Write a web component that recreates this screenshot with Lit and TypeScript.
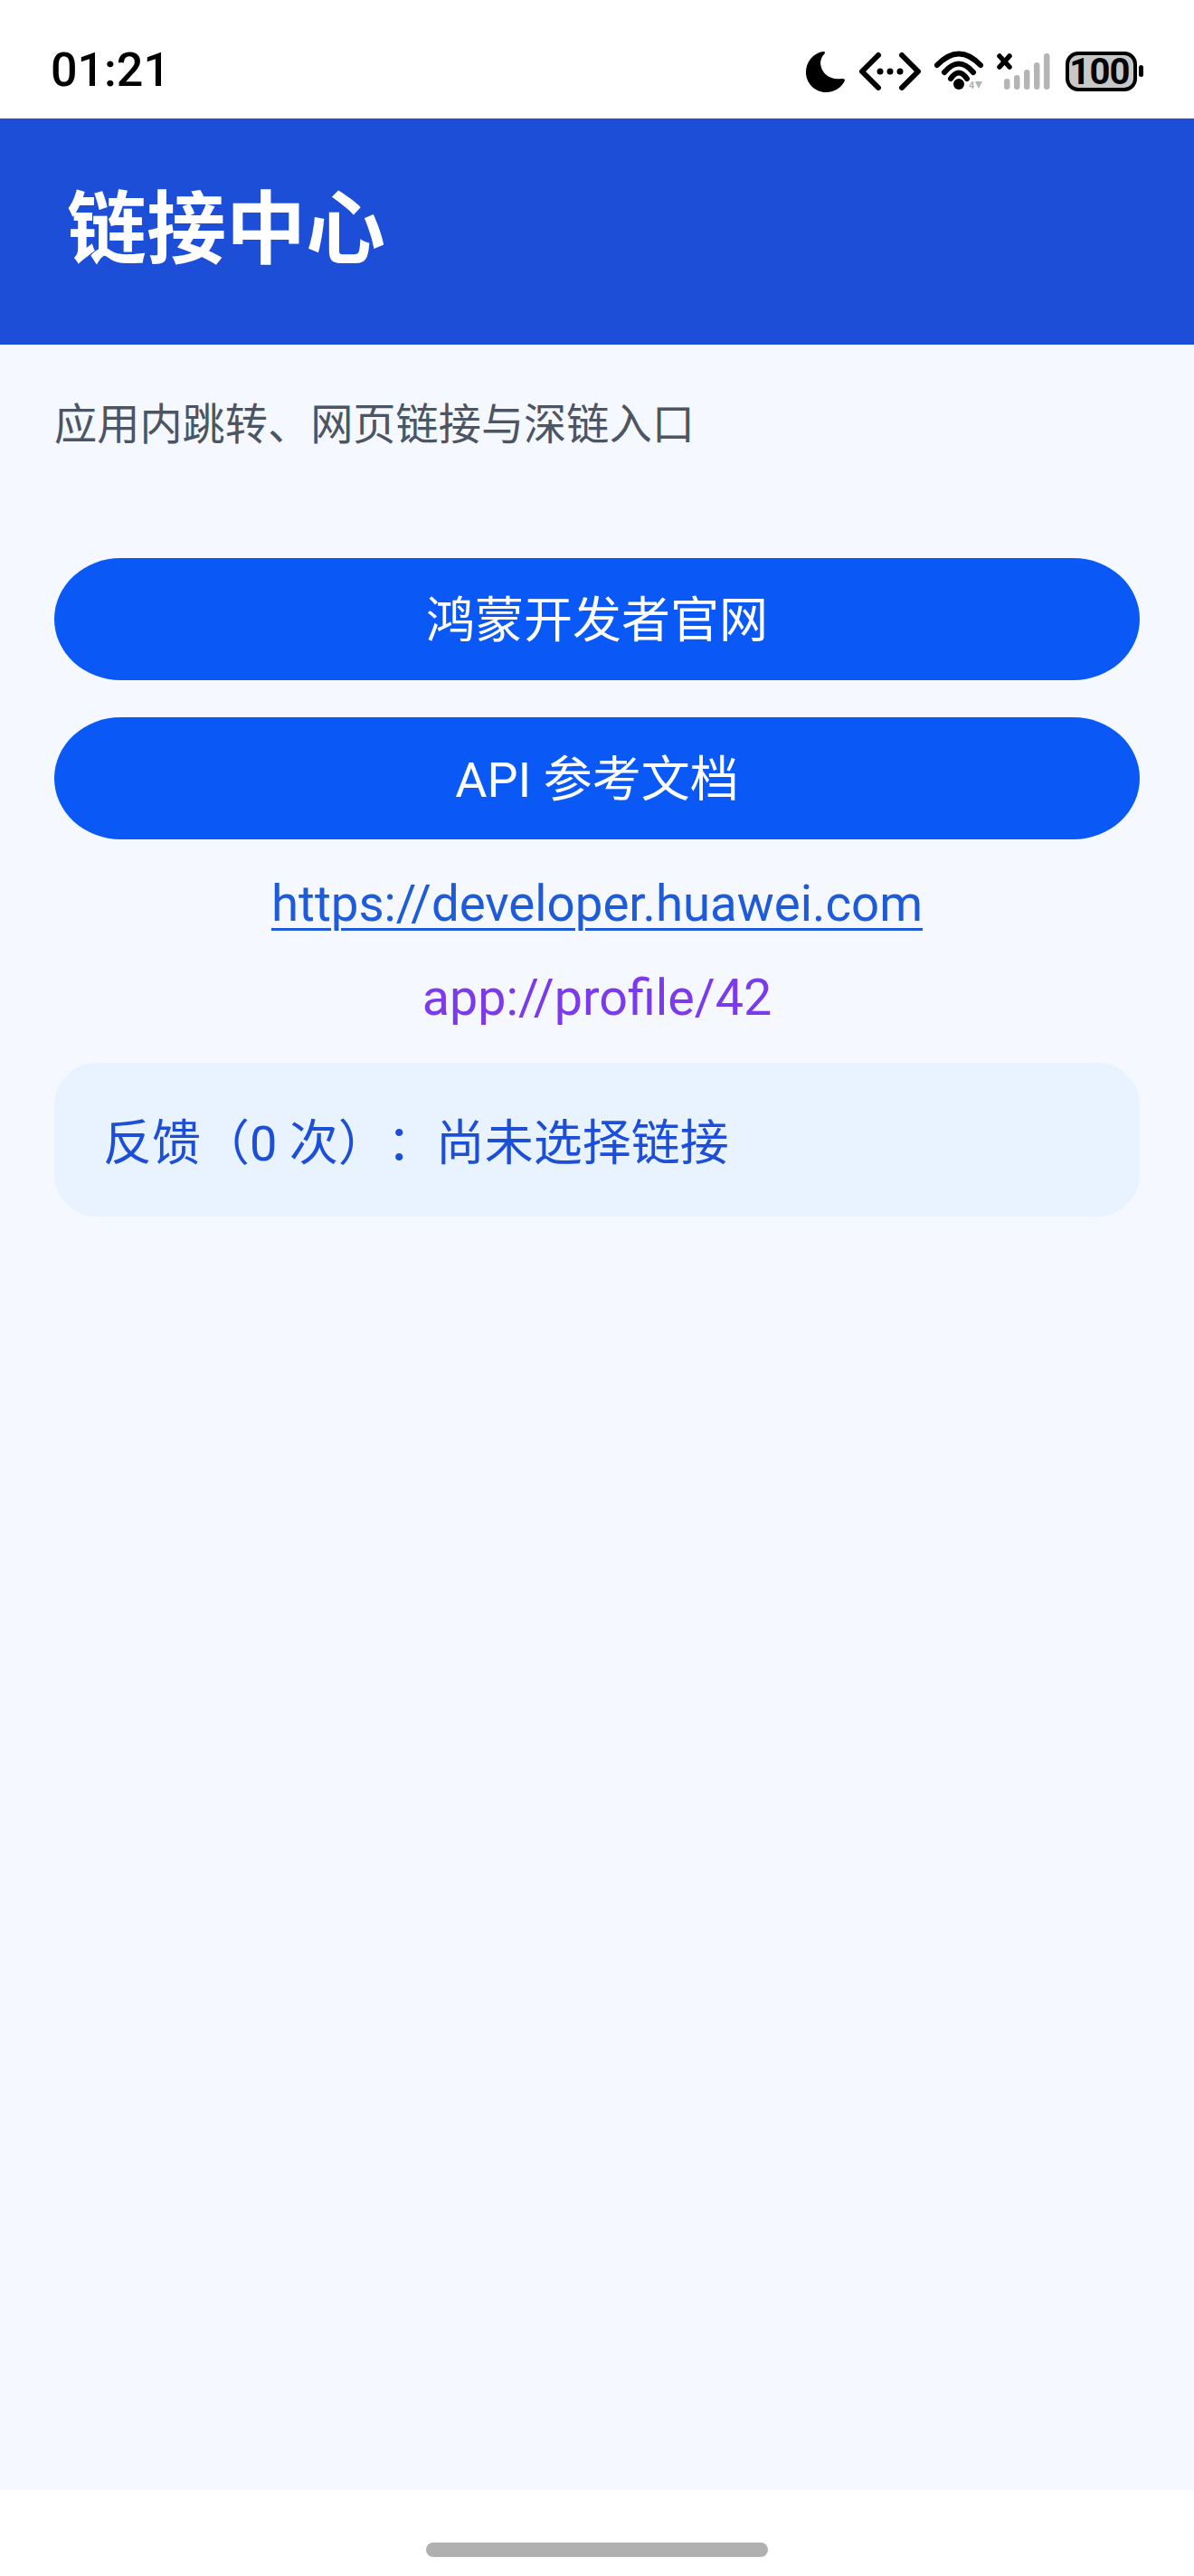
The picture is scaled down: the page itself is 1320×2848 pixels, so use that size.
import { LitElement, html, css } from "lit";
import { customElement } from "lit/decorators.js";

@customElement("app-root")
export class AppRoot extends LitElement {
  static styles = css`
    :host { display: block; width: 1320px; height: 2848px; background: #fff; font-family: Roboto, "Noto Sans CJK SC", sans-serif; text-spacing-trim: space-all; }
    .screen { display: flex; flex-direction: column; height: 2848px; }
    .status { height: 131px; display: flex; align-items: stretch; justify-content: space-between; flex: none; }
    .time { font-family: Roboto, sans-serif; font-weight: 500; font-size: 52px; color: #000; letter-spacing: 0; padding: 47px 0 0 56px; line-height: 62px; }
    .icons { width: 390px; height: 131px; margin-right: 50px; display: block; }
    .header { height: 250px; flex: none; background: #1d4ed8; color: #fff; font-size: 88px; font-weight: 700; line-height: 100px; padding: 73px 0 0 74px; box-sizing: border-box; }
    .body { flex: 1; background: #f5f8ff; padding: 55px 60px 0; display: flex; flex-direction: column; }
    .sub { font-size: 47.2px; color: #4b5563; line-height: 68px; margin-bottom: 113px; }
    .btn { height: 135px; box-sizing: border-box; padding-bottom: 6px; border-radius: 74px / 68px; background: #0a59f7; color: #fff; font-size: 54px; display: flex; align-items: center; justify-content: center; margin-bottom: 41px; }
    .link { text-align: center; font-size: 54.6px; line-height: 70px; color: #1d5bd8; }
    .link.web { text-decoration: underline; text-decoration-thickness: 3px; text-underline-offset: 8px; margin-top: -5px; }
    .link.deep { color: #7c3aed; font-size: 55.6px; margin-top: 34px; }
    .fb { margin-top: 37px; height: 170px; box-sizing: border-box; padding: 0 0 2px 54px; border-radius: 46px; background: #e9f3ff; color: #1d4ed8; font-size: 54px; display: flex; align-items: center; }
    .nav { height: 95px; flex: none; background: #fff; display: flex; justify-content: center; padding-top: 58px; box-sizing: border-box; }
    .bar { width: 378px; height: 16px; border-radius: 8px; background: #b0b0b0; }
  `;
  render() {
    return html`<div class="screen">
      <div class="status">
        <span class="time">01:21</span>
        <svg class="icons" viewBox="880 0 390 131" aria-hidden="true">
          <path d="M910 57 C898 59 891 69 891 80 C891 92 901 102 913 102 C923 102 931 96 934 89 C934 87 932 87 930 87 C919 89 908 82 907 70 C907 66 909 62 911 60 C913 58 912 57 910 57 Z" fill="#000"/>
          <g fill="none" stroke="#000" stroke-width="6" stroke-linecap="round" stroke-linejoin="round">
            <path d="M971 61 L953 79 L971 97"/><path d="M997 61 L1015 79 L997 97"/>
            <path d="M1036 72 Q1060 47 1084 72"/><path d="M1044 80 Q1060 61 1076 80"/><path d="M1051 87 Q1060 74 1069 87"/>
          </g>
          <g fill="#000"><circle cx="973" cy="79" r="3.5"/><circle cx="984" cy="79" r="3.5"/><circle cx="995" cy="79" r="3.5"/><circle cx="1060" cy="93" r="6"/></g>
          <text x="1071" y="98" font-family="Roboto, sans-serif" font-weight="700" font-size="11" fill="#b5b5b5">4</text>
          <path d="M1078 90 L1086 90 L1082 98 Z" fill="#b5b5b5"/>
          <g stroke="#000" stroke-width="5.5" stroke-linecap="round"><path d="M1105 62 L1116 74"/><path d="M1116 62 L1105 74"/></g>
          <g fill="#b5b5b5">
            <rect x="1110" y="87" width="6.5" height="12" rx="3.2"/><rect x="1121" y="83" width="6.5" height="16" rx="3.2"/><rect x="1132" y="77" width="6.5" height="22" rx="3.2"/><rect x="1143" y="69" width="6.5" height="30" rx="3.2"/><rect x="1154" y="59" width="6.5" height="40" rx="3.2"/>
          </g>
          <rect x="1180" y="59" width="75" height="40" rx="12" fill="#c8c8c8" stroke="#000" stroke-width="4"/>
          <rect x="1259" y="72" width="5" height="13" rx="2.5" fill="#000"/>
          <text x="1215.5" y="93" text-anchor="middle" font-family="Roboto, sans-serif" font-weight="700" font-size="40" letter-spacing="-0.8" fill="#000">100</text>
        </svg>
      </div>
      <div class="header">链接中心</div>
      <div class="body">
        <div class="sub">应用内跳转、网页链接与深链入口</div>
        <div class="btn">鸿蒙开发者官网</div>
        <div class="btn">API 参考文档</div>
        <div class="link web">https://developer.huawei.com</div>
        <div class="link deep">app://profile/42</div>
        <div class="fb">反馈（0 次）：尚未选择链接</div>
      </div>
      <div class="nav"><div class="bar"></div></div>
    </div>`;
  }
}
